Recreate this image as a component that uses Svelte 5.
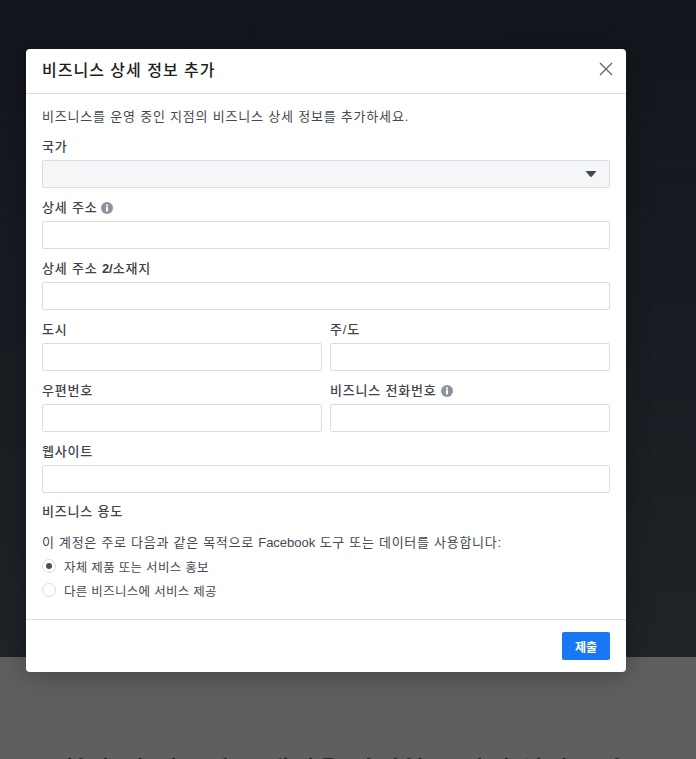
<script>
  const usage = [
    { label: "자체 제품 또는 서비스 홍보", checked: true },
    { label: "다른 비즈니스에 서비스 제공", checked: false },
  ];
</script>

{#snippet info()}
  <svg class="info" viewBox="0 0 12 12" width="12" height="12" aria-hidden="true">
    <circle cx="6" cy="6" r="6" fill="#8d949e" />
    <rect x="5" y="5" width="2" height="4.4" fill="#fff" />
    <rect x="5" y="2.5" width="2" height="1.8" fill="#fff" />
  </svg>
{/snippet}

<div class="page">
  <div class="backdrop">
    <p class="behind">회사 및 비즈니스 계정을 관리하는 방법 알아보기</p>
  </div>

  <div class="modal">
    <header class="head">
      <h2>비즈니스 상세 정보 추가</h2>
      <svg class="close" viewBox="0 0 14 14" width="14" height="14" aria-hidden="true">
        <path d="M1 1 L13 13 M13 1 L1 13" stroke="#606770" stroke-width="1.4" fill="none" />
      </svg>
    </header>

    <div class="body">
      <p class="intro">비즈니스를 운영 중인 지점의 비즈니스 상세 정보를 추가하세요.</p>

      <div class="field">
        <span class="label">국가</span>
        <div class="select">
          <svg viewBox="0 0 12 8" width="12" height="8" aria-hidden="true">
            <path d="M0.5 1 H11.5 L7 6.5 Q6 7.4 5 6.5 Z" fill="#444950" />
          </svg>
        </div>
      </div>

      <div class="field">
        <span class="label"><span>상세 주소</span>{@render info()}</span>
        <input type="text" />
      </div>

      <div class="field">
        <span class="label"><span>상세 주소 <b>2/</b>소재지</span></span>
        <input type="text" />
      </div>

      <div class="two">
        <div class="field">
          <span class="label">도시</span>
          <input type="text" />
        </div>
        <div class="field">
          <span class="label">주/도</span>
          <input type="text" />
        </div>
      </div>

      <div class="two">
        <div class="field">
          <span class="label">우편번호</span>
          <input type="text" />
        </div>
        <div class="field">
          <span class="label"><span>비즈니스 전화번호</span>{@render info()}</span>
          <input type="text" />
        </div>
      </div>

      <div class="field">
        <span class="label">웹사이트</span>
        <input type="text" />
      </div>

      <div class="usage-title">비즈니스 용도</div>
      <p class="usage-text">이 계정은 주로 다음과 같은 목적으로 <span class="latin">Facebook</span> 도구 또는 데이터를 사용합니다:</p>

      {#each usage as item}
        <div class="radio-row">
          <span class="radio" class:checked={item.checked}></span>
          <span>{item.label}</span>
        </div>
      {/each}
    </div>

    <footer class="foot">
      <button type="button" class="submit">제출</button>
    </footer>
  </div>
</div>

<style>
  :global(body) {
    margin: 0;
    background: #111;
  }
  .page {
    position: relative;
    width: 696px;
    height: 759px;
    overflow: hidden;
    background: linear-gradient(180deg, #12151b 0%, #22252a 100%);
    font-family: "Liberation Sans", "Noto Sans CJK KR", sans-serif;
    color: #1c1e21;
  }
  .backdrop {
    position: absolute;
    left: 0;
    right: 0;
    top: 657px;
    height: 102px;
    background: #5f5f5f;
    overflow: hidden;
  }
  .behind {
    position: absolute;
    left: 60px;
    top: 96px;
    margin: 0;
    font-size: 28px;
    line-height: 40px;
    font-weight: 500;
    white-space: nowrap;
    color: #222;
  }
  .modal {
    position: absolute;
    left: 26px;
    top: 49px;
    width: 600px;
    height: 623px;
    background: #fff;
    border-radius: 4px;
    display: flex;
    flex-direction: column;
    box-shadow: 0 2px 26px rgba(0, 0, 0, 0.3);
  }
  .head {
    height: 44px;
    flex: none;
    border-bottom: 1px solid #dadde1;
    display: flex;
    align-items: center;
    justify-content: space-between;
    padding: 0 13px 0 16px;
  }
  .head h2 {
    margin: 0;
    font-size: 16px;
    line-height: 20px;
    font-weight: 500;
    color: #1c1e21;
    letter-spacing: 1px;
  }
  .close {
    display: block;
    margin-bottom: 4px;
  }
  .body {
    flex: 1;
    padding: 15px 16px 0;
  }
  .intro {
    margin: 0 0 14px;
    font-size: 13px;
    line-height: 16px;
    color: #444950;
    letter-spacing: 0.8px;
  }
  .field {
    display: flex;
    flex-direction: column;
    margin-bottom: 12px;
    min-width: 0;
  }
  .label {
    font-size: 13px;
    line-height: 16px;
    font-weight: 500;
    color: #3f434a;
    letter-spacing: 0.8px;
    margin-bottom: 5px;
    display: flex;
    align-items: center;
    gap: 4px;
  }
  .label b {
    letter-spacing: 0;
  }
  .info {
    display: block;
  }
  input,
  .select {
    box-sizing: border-box;
    height: 28px;
    width: 100%;
    border: 1px solid #dadde1;
    border-radius: 2px;
    background: #fff;
    margin: 0;
    padding: 0 8px;
  }
  .select {
    background: #f5f6f7;
    display: flex;
    align-items: center;
    justify-content: flex-end;
    padding-right: 12px;
  }
  .two {
    display: grid;
    grid-template-columns: 280px 280px;
    gap: 8px;
  }
  .usage-title {
    font-size: 13px;
    line-height: 16px;
    font-weight: 500;
    color: #3f434a;
    letter-spacing: 0.8px;
    margin-top: -1px;
  }
  .usage-text {
    margin: 15px 0 3px;
    font-size: 13px;
    line-height: 16px;
    color: #444950;
    letter-spacing: 0.72px;
  }
  .latin {
    letter-spacing: 0;
  }
  .radio-row {
    display: flex;
    align-items: center;
    gap: 8px;
    height: 24px;
    font-size: 12.5px;
    color: #444950;
    letter-spacing: 0.3px;
  }
  .radio {
    box-sizing: border-box;
    width: 14px;
    height: 14px;
    border: 1px solid #dadde1;
    border-radius: 50%;
    background: #fff;
    display: flex;
    align-items: center;
    justify-content: center;
  }
  .radio.checked::after {
    content: "";
    width: 6px;
    height: 6px;
    border-radius: 50%;
    background: #4b4f56;
  }
  .foot {
    flex: none;
    height: 52px;
    border-top: 1px solid #dadde1;
    display: flex;
    align-items: center;
    justify-content: flex-end;
    padding: 0 16px;
  }
  .submit {
    width: 48px;
    height: 28px;
    border: 0;
    border-radius: 2px;
    background: #1877f2;
    color: #fff;
    font: 700 12px "Liberation Sans", "Noto Sans CJK KR", sans-serif;
    padding: 0;
  }
</style>
